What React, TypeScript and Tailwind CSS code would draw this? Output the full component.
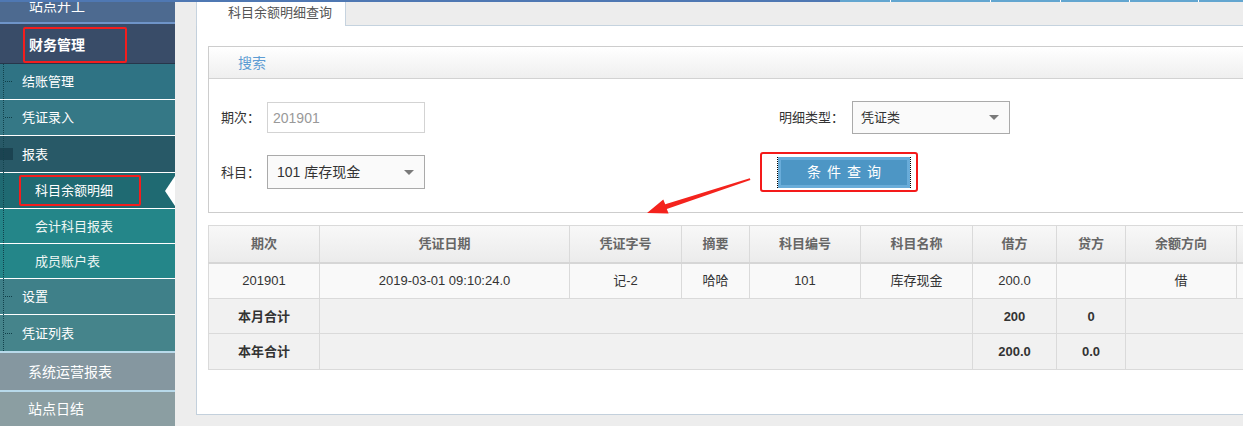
import React from 'react';

type MenuItem = {
  label: string;
  cls: string;
  text: string;
  dash?: boolean;
};

const menu: MenuItem[] = [
  { label: '结账管理', cls: 'h-[36px] bg-[#2f7384] border-b border-white', text: 'pl-[22px] text-[13px]', dash: true },
  { label: '凭证录入', cls: 'h-[36px] bg-[#357886] border-b border-white', text: 'pl-[22px] text-[13px]', dash: true },
];

const cols = [111, 250, 112, 68, 111, 112, 84, 69, 111, 60];
const headers = ['期次', '凭证日期', '凭证字号', '摘要', '科目编号', '科目名称', '借方', '贷方', '余额方向', ''];
const row = ['201901', '2019-03-01 09:10:24.0', '记-2', '哈哈', '101', '库存现金', '200.0', '', '借', ''];

function Caret() {
  return <span className="w-0 h-0 border-x-[5px] border-x-transparent border-t-[5px] border-t-[#7a7a7a]" />;
}

function Sidebar() {
  return (
    <aside className="w-[175px] shrink-0 flex flex-col relative text-white">
      <div className="h-[22px] bg-[#4d6a90] border-b-2 border-[#6f94c8] overflow-hidden">
        <div className="-mt-[6px] pl-[29px] leading-[20px] text-[14px]">站点开工</div>
      </div>
      <div className="h-[40px] bg-[#394c68] border-b border-[#27364b] flex items-end">
        <span className="ml-[23px] w-[104px] h-[36px] border-2 border-[#f41d1d] rounded-[2px] pl-[4px] flex items-center font-bold text-[14px]">
          财务管理
        </span>
      </div>
      {menu.map((m) => (
        <div key={m.label} className={`${m.cls} flex items-center relative`}>
          {m.dash && <span className="absolute left-[5px] w-[7px] border-t border-dotted border-[#0f3e48]" />}
          <span className={m.text}>{m.label}</span>
        </div>
      ))}
      <div className="h-[37px] bg-[#285967] border-b border-white flex items-center">
        <span className="w-[13px] h-[12px] bg-[#1b4351]" />
        <span className="pl-[9px] text-[13px]">报表</span>
      </div>
      <div className="h-[36px] bg-[#1f6a72] border-b border-white flex items-center">
        <span className="ml-[19px] w-[122px] h-[31px] border-2 border-[#f41d1d] rounded-[2px] pl-[14px] flex items-center text-[13px]">
          科目余额明细
        </span>
        <span className="ml-auto w-0 h-0 border-y-[15px] border-y-transparent border-r-[10px] border-r-white" />
      </div>
      <div className="h-[35px] bg-[#248689] border-b border-white flex items-center">
        <span className="pl-[35px] text-[13px] text-[#eef6f4]">会计科目报表</span>
      </div>
      <div className="h-[35px] bg-[#248689] border-b border-white flex items-center">
        <span className="pl-[35px] text-[13px] text-[#eef6f4]">成员账户表</span>
      </div>
      <div className="h-[36px] bg-[#3f8089] border-b border-white flex items-center relative">
        <span className="absolute left-[5px] w-[7px] border-t border-dotted border-[#0f3e48]" />
        <span className="pl-[22px] text-[13px]">设置</span>
      </div>
      <div className="h-[38px] bg-[#45848b] border-b-2 border-[#b8d9ea] flex items-center relative">
        <span className="absolute left-[5px] w-[7px] border-t border-dotted border-[#0f3e48]" />
        <span className="pl-[22px] text-[13px]">凭证列表</span>
      </div>
      <div className="h-[39px] bg-[#8597a0] border-b-2 border-[#b8d9ea] flex items-center">
        <span className="pl-[28px] text-[14px]">系统运营报表</span>
      </div>
      <div className="flex-1 bg-[#8b9ea2] flex items-center">
        <span className="pl-[28px] text-[14px]">站点日结</span>
      </div>
      <span className="absolute left-[3px] top-[62px] h-[287px] border-l border-dotted border-[#12424c]" />
    </aside>
  );
}

function SearchBox() {
  return (
    <div className="border-y border-l border-[#cdcdcd]">
      <div className="h-[32px] border-b border-[#d2d2d2] bg-gradient-to-b from-white to-[#efefef] flex items-center pl-[29px] text-[14px] text-[#5d9cd3]">
        搜索
      </div>
      <div className="h-[133px] pt-[22px] pl-[12px] flex flex-col gap-[21px] text-[13px] text-[#333]">
        <div className="flex items-center h-[33px]">
          <div className="w-[558px] flex items-center">
            <span className="w-[46px]">期次：</span>
            <div className="w-[158px] h-[31px] border border-[#d3d3d3] flex items-center pl-[5px] text-[14px] text-[#999]">201901</div>
          </div>
          <span className="w-[73px]">明细类型：</span>
          <div className="w-[158px] h-[33px] border border-[#aaaaaa] bg-[#fafafa] flex items-center pl-[8px] pr-[10px]">
            <span>凭证类</span>
            <span className="ml-auto flex"><Caret /></span>
          </div>
        </div>
        <div className="flex items-center h-[34px]">
          <div className="w-[558px] flex items-center">
            <span className="w-[46px]">科目：</span>
            <div className="w-[158px] h-[34px] border border-[#aaaaaa] bg-[#fafafa] flex items-center pl-[9px] pr-[10px] text-[14px]">
              <span>101 库存现金</span>
              <span className="ml-auto flex"><Caret /></span>
            </div>
          </div>
          <div className="-ml-[19px] w-[158px] h-[40px] border-2 border-[#f41a1a] rounded-[3px] flex items-center">
            <div className="ml-[15px] w-[134px] h-[31px] border-x border-dotted border-black">
              <div className="h-full border-[3px] border-[#69acd9] bg-[#4d96c5] flex items-center justify-center text-white text-[14px] tracking-[6px] pl-[6px]">
                条件查询
              </div>
            </div>
          </div>
        </div>
      </div>
    </div>
  );
}

function DataTable() {
  return (
    <table className="table-fixed border-collapse text-[13px] text-[#333]" style={{ width: cols.reduce((a, b) => a + b, 0) }}>
      <colgroup>
        {cols.map((w, i) => (
          <col key={i} style={{ width: w }} />
        ))}
      </colgroup>
      <thead>
        <tr className="h-[37px] bg-gradient-to-b from-[#f8f8f8] to-[#ebebeb]">
          {headers.map((h, i) => (
            <th key={i} className="border border-[#dadada] border-b-2 border-b-[#d6d6d6] font-bold text-[#666] text-center">
              {h}
            </th>
          ))}
        </tr>
      </thead>
      <tbody>
        <tr className="h-[36px] bg-[#f9f9f9]">
          {row.map((c, i) => (
            <td key={i} className="border border-[#dadada] text-center">{c}</td>
          ))}
        </tr>
        <tr className="h-[35px] bg-[#f1f1f1] font-bold">
          <td className="border border-[#dadada] text-center">本月合计</td>
          <td colSpan={5} className="border border-[#dadada]" />
          <td className="border border-[#dadada] text-center">200</td>
          <td className="border border-[#dadada] text-center">0</td>
          <td colSpan={2} className="border border-[#dadada]" />
        </tr>
        <tr className="h-[36px] bg-[#f1f1f1] font-bold">
          <td className="border border-[#dadada] text-center">本年合计</td>
          <td colSpan={5} className="border border-[#dadada]" />
          <td className="border border-[#dadada] text-center">200.0</td>
          <td className="border border-[#dadada] text-center">0.0</td>
          <td colSpan={2} className="border border-[#dadada]" />
        </tr>
      </tbody>
    </table>
  );
}

export default function App() {
  return (
    <div className="w-[1243px] h-[426px] overflow-hidden relative bg-[#ededed] font-['Liberation_Sans','Noto_Sans_CJK_SC',sans-serif] leading-none">
      <div className="flex h-[2px]">
        <div className="w-[840px] bg-[#4f78b3]" />
        <div className="flex-1 flex gap-px bg-white">
          <div className="w-[50px] bg-[#63a6d0]" />
          <div className="w-[99px] bg-[#63a6d0]" />
          <div className="w-[69px] bg-[#63a6d0]" />
          <div className="w-[68px] bg-[#63a6d0]" />
          <div className="w-[68px] bg-[#63a6d0]" />
          <div className="flex-1 bg-[#63a6d0]" />
        </div>
      </div>
      <div className="flex h-[424px]">
        <Sidebar />
        <main className="flex-1 min-w-0 pl-[21px] flex flex-col">
          <div className="flex h-[24px] shrink-0">
            <div className="w-[150px] bg-white border-x border-[#c6d3df] pl-[31px] pt-[4px] text-[13px] text-[#555]">
              科目余额明细查询
            </div>
            <div className="flex-1 border-b border-[#c5d3df]" />
          </div>
          <div className="h-[389px] bg-white border-l border-b border-[#c3d0dc] pl-[11px] pt-[20px] overflow-hidden">
            <SearchBox />
            <div className="mt-[12px]">
              <DataTable />
            </div>
          </div>
        </main>
      </div>
      <svg className="absolute left-0 top-0 pointer-events-none" width="1243" height="426">
        <polygon
          points="749.8,178.2 665.2,204.3 663.3,199.6 647,213 668.6,213.6 666.8,209.1 750.4,180"
          fill="#f4231d"
        />
      </svg>
    </div>
  );
}
